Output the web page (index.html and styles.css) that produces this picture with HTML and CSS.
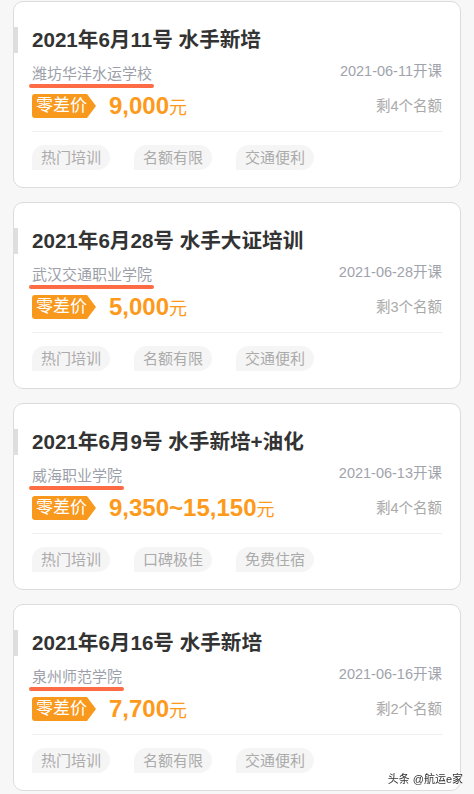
FILE: index.html
```html
<!DOCTYPE html>
<html lang="zh-CN">
<head>
  <meta charset="UTF-8">
  <meta name="viewport" content="width=device-width, initial-scale=1">
  <title>船员培训</title>
  <link rel="stylesheet" href="styles.css">
</head>
<body>
  <div class="course-list">

    <div class="course">
      <div class="course-title">2021年6月11号 水手新培</div>
      <div class="row school-row">
        <div class="school">
          <span>潍坊华洋水运学校</span>
          <div class="school-line"></div>
        </div>
        <div class="open-date">2021-06-11开课</div>
      </div>
      <div class="row price-row">
        <div class="price-left">
          <span class="badge">零差价</span>
          <span class="price">9,000<small>元</small></span>
        </div>
        <div class="quota">剩4个名额</div>
      </div>
      <div class="tags">
        <span class="tag">热门培训</span>
        <span class="tag">名额有限</span>
        <span class="tag">交通便利</span>
      </div>
    </div>

    <div class="course">
      <div class="course-title">2021年6月28号 水手大证培训</div>
      <div class="row school-row">
        <div class="school">
          <span>武汉交通职业学院</span>
          <div class="school-line"></div>
        </div>
        <div class="open-date">2021-06-28开课</div>
      </div>
      <div class="row price-row">
        <div class="price-left">
          <span class="badge">零差价</span>
          <span class="price">5,000<small>元</small></span>
        </div>
        <div class="quota">剩3个名额</div>
      </div>
      <div class="tags">
        <span class="tag">热门培训</span>
        <span class="tag">名额有限</span>
        <span class="tag">交通便利</span>
      </div>
    </div>

    <div class="course">
      <div class="course-title">2021年6月9号 水手新培+油化</div>
      <div class="row school-row">
        <div class="school">
          <span>威海职业学院</span>
          <div class="school-line"></div>
        </div>
        <div class="open-date">2021-06-13开课</div>
      </div>
      <div class="row price-row">
        <div class="price-left">
          <span class="badge">零差价</span>
          <span class="price">9,350~15,150<small>元</small></span>
        </div>
        <div class="quota">剩4个名额</div>
      </div>
      <div class="tags">
        <span class="tag">热门培训</span>
        <span class="tag">口碑极佳</span>
        <span class="tag">免费住宿</span>
      </div>
    </div>

    <div class="course">
      <div class="course-title">2021年6月16号 水手新培</div>
      <div class="row school-row">
        <div class="school">
          <span>泉州师范学院</span>
          <div class="school-line"></div>
        </div>
        <div class="open-date">2021-06-16开课</div>
      </div>
      <div class="row price-row">
        <div class="price-left">
          <span class="badge">零差价</span>
          <span class="price">7,700<small>元</small></span>
        </div>
        <div class="quota">剩2个名额</div>
      </div>
      <div class="tags">
        <span class="tag">热门培训</span>
        <span class="tag">名额有限</span>
        <span class="tag">交通便利</span>
      </div>
    </div>

  </div>

  <div class="watermark">头条 @航运e家</div>
</body>
</html>
```

FILE: styles.css
```css
body {
  margin: 0;
  background: #f7f7f7;
  font-family: "Liberation Sans", "Noto Sans CJK SC", sans-serif;
  color: #333;
  overflow: hidden;
}

.course-list {
  display: flex;
  flex-direction: column;
  gap: 14px;
  padding: 1px 13px 0;
}

.course {
  background: #fff;
  border: 1px solid #dcdcdc;
  border-radius: 10px;
  padding: 25px 18px 17px;
}

.course-title {
  height: 26px;
  margin-left: -19px;
  padding-left: 14px;
  border-left: 5px solid #dedede;
  font-size: 20.6px;
  font-weight: bold;
  line-height: 26px;
  color: #333;
}

.row {
  display: flex;
  justify-content: space-between;
}

.school-row {
  margin-top: 8px;
  align-items: flex-start;
}

.school {
  display: flex;
  flex-direction: column;
  padding-top: 3px;
  font-size: 15px;
  line-height: 20px;
  color: #9c9fa9;
}

.school span {
  height: 20px;
}

.school-line {
  height: 4px;
  margin: 0 -2px 0 -3px;
  border-radius: 2px;
  background: #fd6c45;
}

.open-date {
  height: 20px;
  font-size: 14.5px;
  line-height: 20px;
  color: #a0a3ac;
}

.price-row {
  height: 24px;
  margin-top: 6px;
  align-items: center;
  padding-bottom: 13px;
  border-bottom: 1px solid #efefef;
}

.price-left {
  display: flex;
  align-items: center;
  height: 24px;
}

.badge {
  height: 24px;
  line-height: 24px;
  padding: 0 9px 0 4px;
  font-size: 17px;
  color: #fff;
  background: #f8981d;
  border-radius: 3px 0 0 3px;
  clip-path: polygon(0 0, calc(100% - 9px) 0, 100% 50%, calc(100% - 9px) 100%, 0 100%);
}

.price {
  display: flex;
  align-items: baseline;
  height: 24px;
  margin-left: 13px;
  font-size: 24px;
  line-height: 24px;
  font-weight: bold;
  color: #fd9a1c;
}

.price small {
  font-size: 18px;
  font-weight: normal;
}

.quota {
  font-size: 14.5px;
  line-height: 20px;
  color: #a9a9a9;
}

.tags {
  display: flex;
  gap: 24px;
  margin-top: 13px;
}

.tag {
  height: 25px;
  line-height: 25px;
  padding: 0 9px;
  font-size: 15px;
  color: #ababab;
  background: #f5f5f5;
  border-radius: 13px 13px 13px 0;
}

.watermark {
  position: fixed;
  right: 11px;
  bottom: 8px;
  font-size: 11px;
  color: #333;
  text-shadow: 0 0 2px #fff;
}
```
